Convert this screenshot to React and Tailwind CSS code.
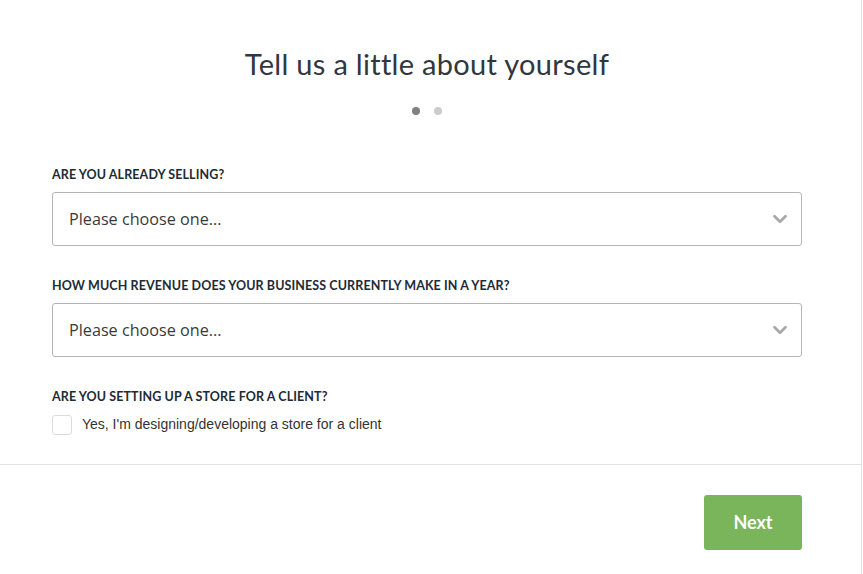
import { ChevronDown } from "lucide-react";

function Field({ label, children, className = "", gap = "mb-[11px]" }) {
  return (
    <div className={className}>
      <div className={`text-[12.5px] font-bold uppercase tracking-[0.1px] text-[#212b36] leading-[14px] ${gap}`}>
        {label}
      </div>
      {children}
    </div>
  );
}

function Select() {
  return (
    <div className="h-[54px] w-full rounded-[3px] border border-[#b5b5b5] bg-white flex items-center justify-between pl-[16px] pr-[10px]">
      <span className="text-[16.2px] text-[#3a3a3a] font-['Open_Sans',sans-serif]">
        Please choose one...
      </span>
      <ChevronDown size={22} strokeWidth={3} className="text-[#a8a8a8]" />
    </div>
  );
}

export default function App() {
  return (
    <div className="w-[863px] h-[574px] bg-white font-['Lato',sans-serif]">
      <div className="w-[862px] h-full border-r border-[#e3e3e3] flex flex-col">
        <div className="pl-[52px] pr-[59px] pt-[45px]">
          <h1 className="text-center text-[29px] leading-[38px] text-[#31373d] tracking-[0.3px]">
            Tell us a little about yourself
          </h1>
          <div className="flex justify-center gap-[14px] mt-[24px]">
            <span className="w-[8px] h-[8px] rounded-full bg-[#808080]" />
            <span className="w-[8px] h-[8px] rounded-full bg-[#cccccc]" />
          </div>
          <Field label="Are you already selling?" className="mt-[53px]" gap="mb-[10px]">
            <Select />
          </Field>
          <Field label="How much revenue does your business currently make in a year?" className="mt-[33px]" gap="mb-[10px]">
            <Select />
          </Field>
          <Field label="Are you setting up a store for a client?" className="mt-[33px]" gap="mb-[10px]">
            <label className="flex items-center gap-[10px]">
              <span className="w-[20px] h-[20px] rounded-[3px] border border-[#dcdcdc] bg-white" />
              <span className="text-[14px] text-[#333] font-['Liberation_Sans',Arial,sans-serif]">
                Yes, I'm designing/developing a store for a client
              </span>
            </label>
          </Field>
        </div>
        <div className="mt-[29px] border-t border-[#e3e3e3] flex justify-end pr-[59px] pt-[30px]">
          <button className="w-[98px] h-[55px] rounded-[3px] bg-[#7ab55c] text-white text-[18px] font-bold">
            Next
          </button>
        </div>
      </div>
    </div>
  );
}
